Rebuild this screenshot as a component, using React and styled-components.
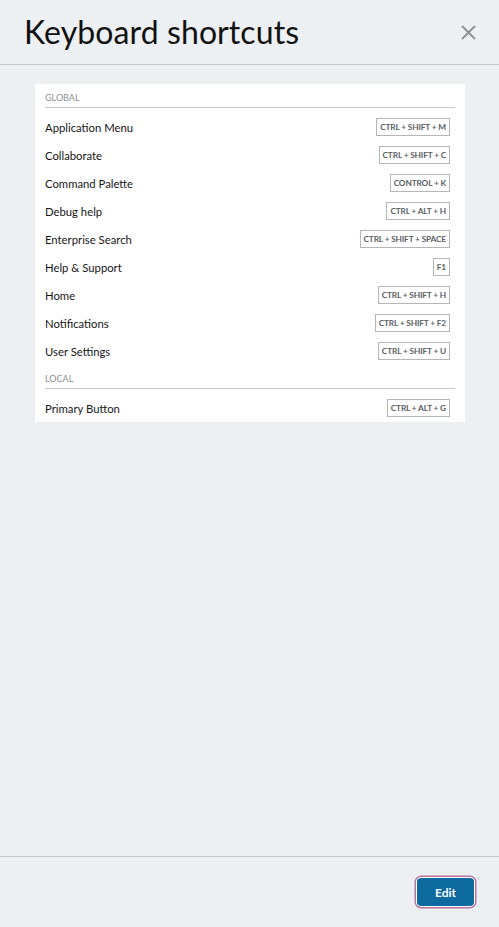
import React from "react";
import styled, { createGlobalStyle } from "styled-components";

const Global = createGlobalStyle`
  html, body { margin: 0; padding: 0; height: 100%; }
  body { background: #edf0f3; font-family: "Source Sans Pro", Lato, "Open Sans", sans-serif; }
  #root { height: 100%; }
`;

const Panel = styled.div`
  display: flex;
  flex-direction: column;
  height: 927px;
  background: #edf0f3;
`;

const Header = styled.header`
  display: flex;
  align-items: center;
  justify-content: space-between;
  height: 65px;
  padding: 0 24px 0 24px;
  border-bottom: 1px solid #c8cacc;
  box-sizing: border-box;
`;

const Title = styled.h1`
  margin: 0;
  font-family: Lato, sans-serif;
  font-weight: 400;
  font-size: 32px;
  color: #111;
  letter-spacing: 0.1px;
  padding-bottom: 1px;
`;

const Close = styled.button`
  border: 0;
  background: none;
  padding: 0;
  width: 16px;
  height: 16px;
  display: flex;
  align-items: center;
  justify-content: center;
  cursor: pointer;
  margin-right: -1px;
`;

const Body = styled.main`
  flex: 1;
  padding: 19px 34px 0 35px;
`;

const Card = styled.section`
  background: #fff;
  padding: 5px 10px 0 10px;
`;

const GroupLabel = styled.div`
  font-family: Lato, sans-serif;
  font-size: 9px;
  line-height: 11px;
  color: #8a8f94;
  text-transform: uppercase;
  padding: 3px 0 4px;
  border-bottom: 1px solid #c4c6c8;
  margin-top: ${(p) => (p.$first ? "0" : "5px")};
`;

const Rows = styled.ul`
  list-style: none;
  margin: 0;
  padding: 5px 0 0;
`;

const Row = styled.li`
  display: flex;
  align-items: center;
  justify-content: space-between;
  height: 28px;
  padding-right: 5px;
`;

const Label = styled.span`
  font-family: Lato, sans-serif;
  font-size: 11.3px;
  color: #161616;
`;

const Kbd = styled.kbd`
  font-family: Lato, sans-serif;
  font-weight: 700;
  font-size: 8.3px;
  color: #5a5f63;
  border: 1px solid #b4b7ba;
  padding: 0 3px;
  height: 18px;
  display: inline-flex;
  align-items: center;
  letter-spacing: -0.15px;
  box-sizing: border-box;
`;

const Footer = styled.footer`
  border-top: 1px solid #c8cacc;
  height: 71px;
  display: flex;
  align-items: center;
  justify-content: flex-end;
  padding: 0 25px 0 0;
  box-sizing: border-box;
`;

const EditButton = styled.button`
  background: #0d6a9e;
  color: #fff;
  border: 0;
  border-radius: 4px;
  width: 57px;
  height: 28px;
  font-family: Lato, sans-serif;
  font-size: 12px;
  font-weight: 700;
  box-shadow: 0 0 0 1px #fff, 0 0 0 2.5px #b5759e;
  cursor: pointer;
`;

const groups = [
  {
    name: "Global",
    items: [
      ["Application Menu", "CTRL + SHIFT + M"],
      ["Collaborate", "CTRL + SHIFT + C"],
      ["Command Palette", "CONTROL + K"],
      ["Debug help", "CTRL + ALT + H"],
      ["Enterprise Search", "CTRL + SHIFT + SPACE"],
      ["Help & Support", "F1"],
      ["Home", "CTRL + SHIFT + H"],
      ["Notifications", "CTRL + SHIFT + F2"],
      ["User Settings", "CTRL + SHIFT + U"],
    ],
  },
  {
    name: "Local",
    items: [["Primary Button", "CTRL + ALT + G"]],
  },
];

export default function App() {
  return (
    <>
      <Global />
      <Panel>
        <Header>
          <Title>Keyboard shortcuts</Title>
          <Close aria-label="Close">
            <svg width="15" height="15" viewBox="0 0 15 15">
              <path d="M1 1 L14 14 M14 1 L1 14" stroke="#8c8f92" strokeWidth="1.8" />
            </svg>
          </Close>
        </Header>
        <Body>
          <Card>
            {groups.map((g, i) => (
              <div key={g.name}>
                <GroupLabel $first={i === 0}>{g.name}</GroupLabel>
                <Rows>
                  {g.items.map(([label, keys]) => (
                    <Row key={label}>
                      <Label>{label}</Label>
                      <Kbd>{keys}</Kbd>
                    </Row>
                  ))}
                </Rows>
              </div>
            ))}
          </Card>
        </Body>
        <Footer>
          <EditButton>Edit</EditButton>
        </Footer>
      </Panel>
    </>
  );
}
